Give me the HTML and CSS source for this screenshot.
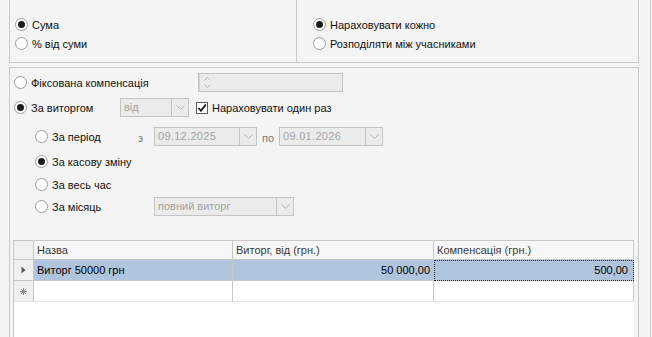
FILE: index.html
```html
<!DOCTYPE html>
<html lang="uk">
<head>
  <meta charset="UTF-8">
  <title>Компенсація</title>
  <link rel="stylesheet" href="styles.css">
</head>
<body>
  <div class="page">
    <!-- top options -->
    <div class="top-panel">
      <div class="top-col left-col">
        <label class="opt"><span class="radio checked"></span><span>Сума</span></label>
        <label class="opt"><span class="radio"></span><span>% від суми</span></label>
      </div>
      <div class="top-col right-col">
        <label class="opt"><span class="radio checked"></span><span class="clip">Нараховувати кожному</span></label>
        <label class="opt"><span class="radio"></span><span>Розподіляти між учасниками</span></label>
      </div>
    </div>

    <!-- compensation settings -->
    <div class="main-panel">
      <div class="row row-1">
        <label class="opt lbl-fixed"><span class="radio"></span><span>Фіксована компенсація</span></label>
        <div class="spin">
          <span class="spin-btn">
            <svg width="7" height="4" viewBox="0 0 7 4"><path d="M0.5 3.5 L3.5 0.5 L6.5 3.5" fill="none" stroke="#b4b4b4"/></svg>
            <svg width="7" height="4" viewBox="0 0 7 4"><path d="M0.5 0.5 L3.5 3.5 L6.5 0.5" fill="none" stroke="#b4b4b4"/></svg>
          </span>
        </div>
      </div>

      <div class="row row-2">
        <label class="opt lbl-main"><span class="radio checked"></span><span>За виторгом</span></label>
        <div class="combo combo-from">
          <span class="combo-text">від</span>
          <span class="combo-btn"><svg width="9" height="5" viewBox="0 0 9 5"><path d="M0.5 0.5 L4.5 4.5 L8.5 0.5" fill="none" stroke="#b4b4b4"/></svg></span>
        </div>
        <label class="check-opt">
          <span class="checkbox"><svg width="10" height="10" viewBox="0 0 10 10"><path d="M1.5 5 L4 7.8 L8.8 1.5" fill="none" stroke="#1a1a1a" stroke-width="1.8"/></svg></span>
          <span>Нараховувати один раз</span>
        </label>
      </div>

      <div class="row row-3">
        <label class="opt lbl-sub"><span class="radio"></span><span>За період</span></label>
        <span class="small-lbl lbl-z">з</span>
        <div class="combo combo-date">
          <span class="combo-text date">09.12.2025</span>
          <span class="combo-btn"><svg width="9" height="5" viewBox="0 0 9 5"><path d="M0.5 0.5 L4.5 4.5 L8.5 0.5" fill="none" stroke="#b4b4b4"/></svg></span>
        </div>
        <span class="small-lbl lbl-po">по</span>
        <div class="combo combo-date2">
          <span class="combo-text date">09.01.2026</span>
          <span class="combo-btn"><svg width="9" height="5" viewBox="0 0 9 5"><path d="M0.5 0.5 L4.5 4.5 L8.5 0.5" fill="none" stroke="#b4b4b4"/></svg></span>
        </div>
      </div>

      <div class="row row-4">
        <label class="opt lbl-sub"><span class="radio checked"></span><span>За касову зміну</span></label>
      </div>

      <div class="row row-5">
        <label class="opt lbl-sub"><span class="radio"></span><span>За весь час</span></label>
      </div>

      <div class="row row-6">
        <label class="opt lbl-month"><span class="radio"></span><span>За місяць</span></label>
        <div class="combo combo-month">
          <span class="combo-text">повний виторг</span>
          <span class="combo-btn"><svg width="9" height="5" viewBox="0 0 9 5"><path d="M0.5 0.5 L4.5 4.5 L8.5 0.5" fill="none" stroke="#b4b4b4"/></svg></span>
        </div>
      </div>

      <div class="grid">
        <div class="cell head rowhead"></div>
        <div class="cell head">Назва</div>
        <div class="cell head">Виторг, від (грн.)</div>
        <div class="cell head">Компенсація (грн.)</div>

        <div class="cell rowhead">
          <svg width="5" height="8" viewBox="0 0 5 8"><path d="M0.5 0.5 L4.5 4 L0.5 7.5 Z" fill="#5a5a5a"/></svg>
        </div>
        <div class="cell sel">Виторг 50000 грн</div>
        <div class="cell sel num">50 000,00</div>
        <div class="cell sel num focus">500,00</div>

        <div class="cell rowhead new">
          <svg width="7" height="7" viewBox="0 0 7 7"><path d="M3.5 0 V7 M0 3.5 H7 M1 1 L6 6 M6 1 L1 6" stroke="#8a8a8a" stroke-width="1"/></svg>
        </div>
        <div class="cell new"></div>
        <div class="cell new"></div>
        <div class="cell new"></div>
      </div>
    </div>
  </div>
</body>
</html>
```

FILE: styles.css
```css
/* General */
body {
  margin: 0;
  background-color: #f4f4f4;
  font-family: "Liberation Sans", Arial, sans-serif;
  font-size: 11px;
  color: #111;
  overflow: hidden;
}

.page {
  width: 651px;
  height: 337px;
  box-sizing: border-box;
  padding-left: 9px;
  border-right: 1px solid #c8c8c8;
}

/* Top panel */
.top-panel {
  width: 630px;
  height: 63px;
  box-sizing: border-box;
  display: flex;
  border: 1px solid #c8c8c8;
  border-top: none;
}

.top-col {
  display: flex;
  flex-direction: column;
  padding-top: 15px;
}

.left-col {
  width: 287px;
  padding-left: 5px;
  box-sizing: border-box;
  border-right: 1px solid #c8c8c8;
}

.right-col {
  padding-left: 16px;
}

.opt {
  display: flex;
  align-items: center;
  height: 19px;
  gap: 4px;
  white-space: nowrap;
}

.clip {
  display: inline-block;
  width: 106px;
  overflow: hidden;
}

/* Radio button */
.radio {
  width: 13px;
  height: 13px;
  box-sizing: border-box;
  border: 1px solid #9c9c9c;
  border-radius: 50%;
  background-color: #ffffff;
  display: flex;
  align-items: center;
  justify-content: center;
  flex-shrink: 0;
}

.radio.checked::after {
  content: "";
  width: 7px;
  height: 7px;
  border-radius: 50%;
  background-color: #1c1c1c;
}

/* Main panel */
.main-panel {
  width: 630px;
  height: 270px;
  box-sizing: border-box;
  margin-top: 4px;
  border: 1px solid #c8c8c8;
  border-bottom: none;
  padding-left: 4px;
}

.row {
  display: flex;
  align-items: center;
  height: 19px;
}

.row-1 { margin-top: 5px; }
.row-2 { margin-top: 6px; }
.row-3 { margin-top: 10px; }
.row-4 { margin-top: 6px; }
.row-5 { margin-top: 4px; }
.row-6 { margin-top: 3px; }

.lbl-fixed { width: 184px; }
.lbl-main { width: 106px; }
.lbl-sub { width: 103px; margin-left: 21px; }
.lbl-month { width: 119px; margin-left: 21px; }

.small-lbl {
  color: #7a7a7a;
  font-size: 11px;
  padding-top: 3px;
}

.lbl-z { width: 16px; }
.lbl-po { width: 17px; margin-left: 5px; }

/* Disabled inputs */
.spin,
.combo {
  height: 19px;
  box-sizing: border-box;
  border: 1px solid #c3c3c3;
  background-color: #ebebeb;
  display: flex;
  justify-content: space-between;
}

.spin { width: 145px; }

.spin-btn {
  width: 15px;
  border-left: 1px solid #d0d0d0;
  display: flex;
  flex-direction: column;
  align-items: center;
  justify-content: center;
  gap: 3px;
}

.combo-text {
  color: #a3a3a3;
  padding-left: 3px;
  line-height: 17px;
  white-space: nowrap;
}

.combo-text.date {
  letter-spacing: 0.3px;
}

.combo-btn {
  width: 16px;
  border-left: 1px solid #c3c3c3;
  display: flex;
  align-items: center;
  justify-content: center;
}

.combo-from { width: 69px; }
.combo-date { width: 103px; }
.combo-date2 { width: 104px; }
.combo-month { width: 140px; height: 19px; }

/* Checkbox */
.check-opt {
  display: flex;
  align-items: center;
  gap: 4px;
  margin-left: 7px;
  white-space: nowrap;
}

.checkbox {
  width: 12px;
  height: 12px;
  box-sizing: border-box;
  border: 1px solid #5c5c5c;
  background-color: #ffffff;
  display: flex;
  align-items: center;
  justify-content: center;
}

/* Data grid */
.grid {
  margin-top: 24px;
  margin-left: -1px;
  width: 621px;
  height: 97px;
  box-sizing: border-box;
  background-color: #ffffff;
  border: 1px solid #c8c8c8;
  border-bottom: none;
  border-right: none;
  display: grid;
  grid-template-columns: 20px 199px 201px 200px;
  grid-template-rows: 19px 21px 21px;
  align-content: start;
}

.cell {
  box-sizing: border-box;
  border-right: 1px solid #c8c8c8;
  border-bottom: 1px solid #c8c8c8;
  padding: 0 3px;
  display: flex;
  align-items: center;
  white-space: nowrap;
  overflow: hidden;
}

.cell.head {
  background-color: #f7f7f7;
  color: #3a3a3a;
}

.cell.rowhead {
  background-color: #f0f0f0;
  justify-content: center;
  padding: 0;
}

.cell.sel {
  background-color: #b0c4de;
  color: #000;
}

.cell.num {
  justify-content: flex-end;
}

.cell.focus {
  outline: 1px dotted #222;
  outline-offset: -1px;
  padding-right: 5px;
}

.cell.new {
  border-bottom-color: #e6e6e6;
}
```
